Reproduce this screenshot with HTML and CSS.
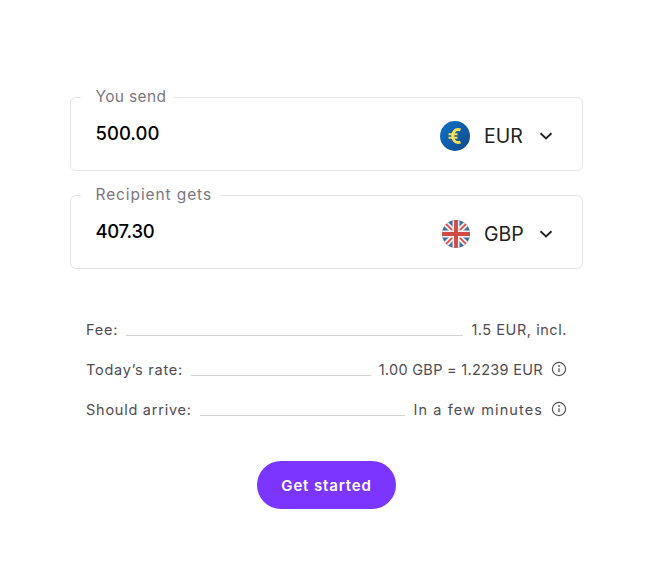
FILE: index.html
```html
<!DOCTYPE html>
<html lang="en">
<head>
<meta charset="utf-8">
<title>Transfer calculator</title>
<link rel="stylesheet" href="styles.css">
</head>
<body>
<main class="calc">
  <fieldset class="field">
    <legend class="field-label">You send</legend>
    <div class="field-row">
      <span class="amount">500.00</span>
      <span class="currency">
        <svg class="flag" viewBox="0 0 30 30" aria-hidden="true">
          <defs><linearGradient id="eu" x1="0" y1="0" x2="1" y2="1"><stop offset="0" stop-color="#1172c4"/><stop offset="1" stop-color="#0f4a8c"/></linearGradient></defs>
          <circle cx="15" cy="15" r="15" fill="url(#eu)"/>
          <path d="M20.500 9a6 6 0 0 0-2.500-.5c-3.200 0-5.200 2.800-5.200 6.500s2 6.500 5.200 6.500a6 6 0 0 0 2.500-.5" fill="none" stroke="#f7de52" stroke-width="3"/>
          <path d="M8.500 13.300h9M8.500 16.700h9" stroke="#f7de52" stroke-width="2"/>
        </svg>
        <span class="code">EUR</span>
        <svg class="chev" viewBox="0 0 14 8" aria-hidden="true"><path d="M1.500 1.300 7 6.500l5.500-5.200" fill="none" stroke="#222" stroke-width="1.900"/></svg>
      </span>
    </div>
  </fieldset>
  <fieldset class="field">
    <legend class="field-label field-label-wide">Recipient gets</legend>
    <div class="field-row">
      <span class="amount amount-narrow">407.30</span>
      <span class="currency">
        <svg class="flag flag-gb" viewBox="0 0 28 28" aria-hidden="true">
          <defs><clipPath id="gb"><circle cx="14" cy="14" r="14"/></clipPath></defs>
          <g clip-path="url(#gb)">
            <rect width="28" height="28" fill="#3f6fa3"/>
            <path d="M0 0 28 28M28 0 0 28" stroke="#f4eeee" stroke-width="5.500"/>
            <path d="M0 0 28 28M28 0 0 28" stroke="#d4504a" stroke-width="1.800"/>
            <path d="M14 0V28M0 14H28" stroke="#f4eeee" stroke-width="7"/>
            <path d="M14 0V28M0 14H28" stroke="#cf4a42" stroke-width="3.800"/>
          </g>
        </svg>
        <span class="code">GBP</span>
        <svg class="chev" viewBox="0 0 14 8" aria-hidden="true"><path d="M1.500 1.300 7 6.500l5.500-5.200" fill="none" stroke="#222" stroke-width="1.900"/></svg>
      </span>
    </div>
  </fieldset>
  <dl class="details">
    <div class="detail"><dt>Fee:</dt><span class="rule"></span><dd class="val-mid">1.5 EUR, incl.</dd></div>
    <div class="detail"><dt>Today’s rate:</dt><span class="rule"></span><dd class="val-tight">1.00 GBP = 1.2239 EUR</dd>
      <svg class="info" viewBox="0 0 16 16" aria-hidden="true"><circle cx="8" cy="8" r="6.600" fill="none" stroke="#555" stroke-width="1.200"/><path d="M8 7.200v4" stroke="#555" stroke-width="1.300"/><circle cx="8" cy="5" r=".9" fill="#555"/></svg></div>
    <div class="detail"><dt>Should arrive:</dt><span class="rule"></span><dd class="val-wide">In a few minutes</dd>
      <svg class="info" viewBox="0 0 16 16" aria-hidden="true"><circle cx="8" cy="8" r="6.600" fill="none" stroke="#555" stroke-width="1.200"/><path d="M8 7.200v4" stroke="#555" stroke-width="1.300"/><circle cx="8" cy="5" r=".9" fill="#555"/></svg></div>
  </dl>
  <div class="actions"><button class="cta" type="button">Get started</button></div>
</main>
</body>
</html>
```
FILE: styles.css
```css
* { box-sizing: border-box; }
html, body { margin: 0; background: #fff; }
body { width: 657px; height: 583px; overflow: hidden; font-family: "Inter", "Lato", sans-serif; }
.calc { padding: 88px 74px 0 70px; }
.field { margin: 0 0 15px; padding: 0; height: 83px; border: 1px solid #e5e5e5; border-radius: 6px; min-width: 0; }
.field-label { margin-left: 10px; padding: 0 8px 2px 14.500px; font-size: 15.500px; line-height: 17px; letter-spacing: .35px; color: #7b7680; }
.field-label-wide { letter-spacing: .9px; }
.field-row { display: flex; align-items: center; justify-content: space-between; height: 53px; padding: 0 28px 0 24.500px; margin-top: 1px; }
.amount { font-size: 18.500px; font-weight: 500; color: #000; margin-bottom: 3px; }
.amount-narrow { letter-spacing: -.3px; }
.currency { display: flex; align-items: center; position: relative; top: 1px; left: -1px; }
.flag { width: 30px; height: 30px; display: block; }
.flag-gb { width: 28px; height: 28px; margin-left: 2px; margin-right: 0; }
.code { margin-left: 14px; width: 40px; font-size: 19.500px; line-height: 26px; color: #222; }
.chev { width: 14px; height: 8px; margin-left: 15px; }
.details { margin: 0; padding: 25px 16px 0; }
.detail { display: flex; align-items: center; height: 40px; font-size: 14.500px; color: #504c54; }
.detail dt, .detail dd { margin: 0; white-space: nowrap; }
.detail dt { letter-spacing: .75px; }
.val-mid { letter-spacing: .55px; }
.val-tight { letter-spacing: .3px; }
.val-wide { letter-spacing: 1.100px; }
.rule { flex: 1; height: 1px; background: #d2d2d2; margin: 13px 8px 0; }
.info { width: 16px; height: 16px; margin-left: 8px; }
.actions { display: flex; justify-content: center; padding-top: 32px; }
.cta { width: 139px; height: 48px; border: 0; border-radius: 24px; background: #7b35ff; color: #fff; font: 600 15px "Inter", sans-serif; letter-spacing: .85px; }
```
